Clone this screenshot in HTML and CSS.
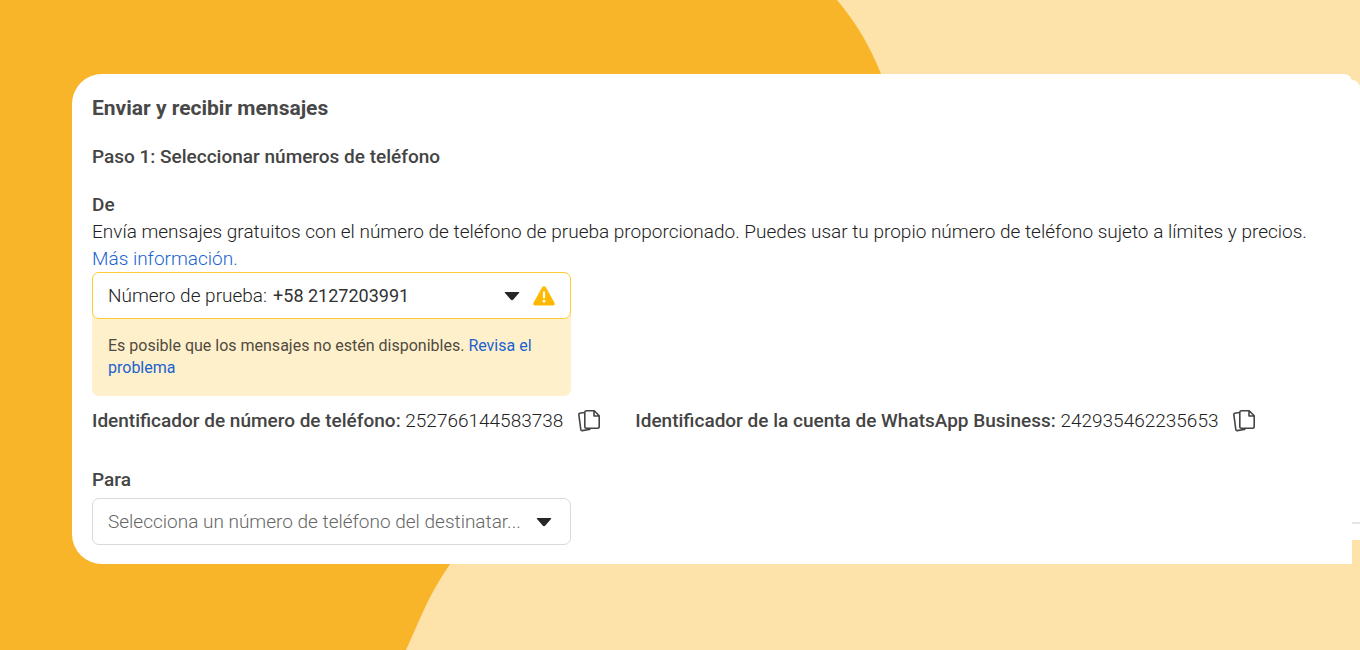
FILE: index.html
```
<!DOCTYPE html>
<html lang="es">
<head>
<meta charset="utf-8">
<meta name="viewport" content="width=device-width, initial-scale=1">
<title>Enviar y recibir mensajes</title>
<link rel="stylesheet" href="styles.css">
</head>
<body>
<svg class="backdrop" viewBox="0 0 1360 650" preserveAspectRatio="xMinYMin slice" aria-hidden="true">
  <path d="M0 0H837Q865 33 881 74C940 260 560 410 450 564Q433 589 422 614L406 650H0Z" fill="#f9b529"/>
</svg>
<main class="stage">
  <section class="panel">
    <h1 class="title">Enviar y recibir mensajes</h1>
    <h2 class="step">Paso 1: Seleccionar números de teléfono</h2>

    <h3 class="label">De</h3>
    <p class="intro">Envía mensajes gratuitos con el número de teléfono de prueba proporcionado. Puedes usar tu propio número de teléfono sujeto a límites y precios. <a class="link" href="#">Más información.</a></p>

    <div class="sender">
      <div class="field field-warning">
        <label class="prefix" for="from">Número de prueba:</label>
        <select class="select select-number" id="from"><option>+58 2127203991</option></select>
        <svg class="caret" viewBox="0 0 16 10" aria-hidden="true"><path d="M1.2 1H14.8Q15.6 1 15 2L9.3 8.6Q8 9.8 6.7 8.6L1 2Q.4 1 1.2 1Z"/></svg>
        <svg class="warning" viewBox="0 0 22 20" aria-hidden="true"><path d="M9.3 1Q11 -.7 12.7 1L21.6 17Q22.3 19.3 20 19.5H2Q-.3 19.3 .4 17Z" fill="#ffb800"/><path d="M11 6.3V11.5" stroke="#fff" stroke-width="2.2" stroke-linecap="round"/><circle cx="11" cy="15.2" r="1.4" fill="#fff"/></svg>
      </div>
      <p class="notice">Es posible que los mensajes no estén disponibles. <a class="link" href="#">Revisa el problema</a></p>
    </div>

    <div class="ids">
      <div class="id"><span><b class="strong">Identificador de número de teléfono:</b> 252766144583738</span>
        <button class="copy" type="button" aria-label="Copiar identificador de número de teléfono"><svg class="copy-icon" viewBox="0 0 24 24" aria-hidden="true"><path d="M7.5 3.5L2.6 4.2Q1.7 4.4 1.8 5.3L3.8 20.5Q4 21.8 5.2 21.6L13.5 20.3"/><path d="M9.5 1.7H17.2L22.2 6.8V17.5Q22.2 19.2 20.5 19.2H9.5Q7.8 19.2 7.8 17.5V3.4Q7.8 1.7 9.5 1.7ZM17 1.9V7H22"/></svg></button>
      </div>
      <div class="id"><span><b class="strong">Identificador de la cuenta de WhatsApp Business:</b> 242935462235653</span>
        <button class="copy" type="button" aria-label="Copiar identificador de la cuenta"><svg class="copy-icon" viewBox="0 0 24 24" aria-hidden="true"><path d="M7.5 3.5L2.6 4.2Q1.7 4.4 1.8 5.3L3.8 20.5Q4 21.8 5.2 21.6L13.5 20.3"/><path d="M9.5 1.7H17.2L22.2 6.8V17.5Q22.2 19.2 20.5 19.2H9.5Q7.8 19.2 7.8 17.5V3.4Q7.8 1.7 9.5 1.7ZM17 1.9V7H22"/></svg></button>
      </div>
    </div>

    <label class="label" for="to">Para</label>
    <div class="field field-recipient">
      <select class="select select-empty" id="to"><option>Selecciona un número de teléfono del destinatar...</option></select>
      <svg class="caret" viewBox="0 0 16 10" aria-hidden="true"><path d="M1.2 1H14.8Q15.6 1 15 2L9.3 8.6Q8 9.8 6.7 8.6L1 2Q.4 1 1.2 1Z"/></svg>
    </div>
  </section>
  <div class="edge"><hr class="edge-line"></div>
</main>
</body>
</html>
```
FILE: styles.css
```
* {
  box-sizing: border-box;
}

body {
  margin: 0;
  min-height: 100vh;
  background: #fde2a9;
  color: #222;
  font: 300 19px/27px Roboto, "Liberation Sans", sans-serif;
}

h1, h2, h3, p {
  margin: 0;
}

.backdrop {
  position: absolute;
  inset: 0;
  z-index: -1;
  width: 100%;
  height: 100%;
}

.stage {
  display: flex;
  padding: 74px 0 86px 72px;
}

.panel {
  flex: 1;
  min-width: 0;
  padding: 20px 20px 19px;
  background: #fff;
  border-radius: 30px 8px 0 30px;
}

.edge {
  flex: none;
  width: 8px;
  margin: 6px 0 24px;
  padding-top: 442px;
  background: #fff;
  border-top-right-radius: 8px;
}

.edge-line {
  height: 2px;
  margin: 0;
  border: 0;
  background: #e5e5e5;
}

.title {
  color: #484848;
  font-size: 21px;
  font-weight: 700;
  line-height: 28px;
}

.step {
  margin: 21px 0;
  color: #444;
  font-size: 19px;
  font-weight: 500;
}

.label {
  display: block;
  color: #444;
  font-size: 19px;
  font-weight: 500;
}

.strong {
  color: #444;
  font-weight: 500;
}

.link {
  color: #1a63d0;
  text-decoration: none;
}

.sender {
  max-width: 479px;
  background: #fff0cc;
  border-radius: 7px;
}

.field {
  display: flex;
  align-items: center;
  max-width: 479px;
  height: 47px;
  padding: 0 15px;
  background: #fff;
  border: 1px solid #dadada;
  border-radius: 7px;
}

.field-warning {
  border-color: #fc3;
}

.field-recipient {
  margin-top: 5px;
}

.prefix {
  margin-right: 6px;
}

.select {
  flex: 1;
  min-width: 0;
  padding: 0;
  appearance: none;
  background: none;
  border: 0;
  color: inherit;
  font: inherit;
}

.select-number {
  color: #333;
  font-size: 18px;
  font-weight: 400;
}

.select-empty {
  color: #666;
}

.caret {
  flex: none;
  width: 16px;
  height: 10px;
  margin: 0 3px 0 12px;
  fill: #262626;
}

.warning {
  flex: none;
  width: 22px;
  height: 20px;
  margin-left: 10px;
}

.notice {
  padding: 16px 16px 17px;
  color: #4f4a3f;
  font-size: 16px;
  font-weight: 400;
  line-height: 22px;
}

.ids {
  display: flex;
  flex-wrap: wrap;
  gap: 0 34px;
  margin: 11px 0 32px;
}

.id {
  display: flex;
  align-items: center;
  gap: 14px;
}

.copy {
  width: 24px;
  height: 24px;
  padding: 0;
  background: none;
  border: 0;
}

.copy-icon {
  display: block;
  width: 24px;
  height: 24px;
  fill: none;
  stroke: #444;
  stroke-width: 1.6;
  stroke-linejoin: round;
}
```
